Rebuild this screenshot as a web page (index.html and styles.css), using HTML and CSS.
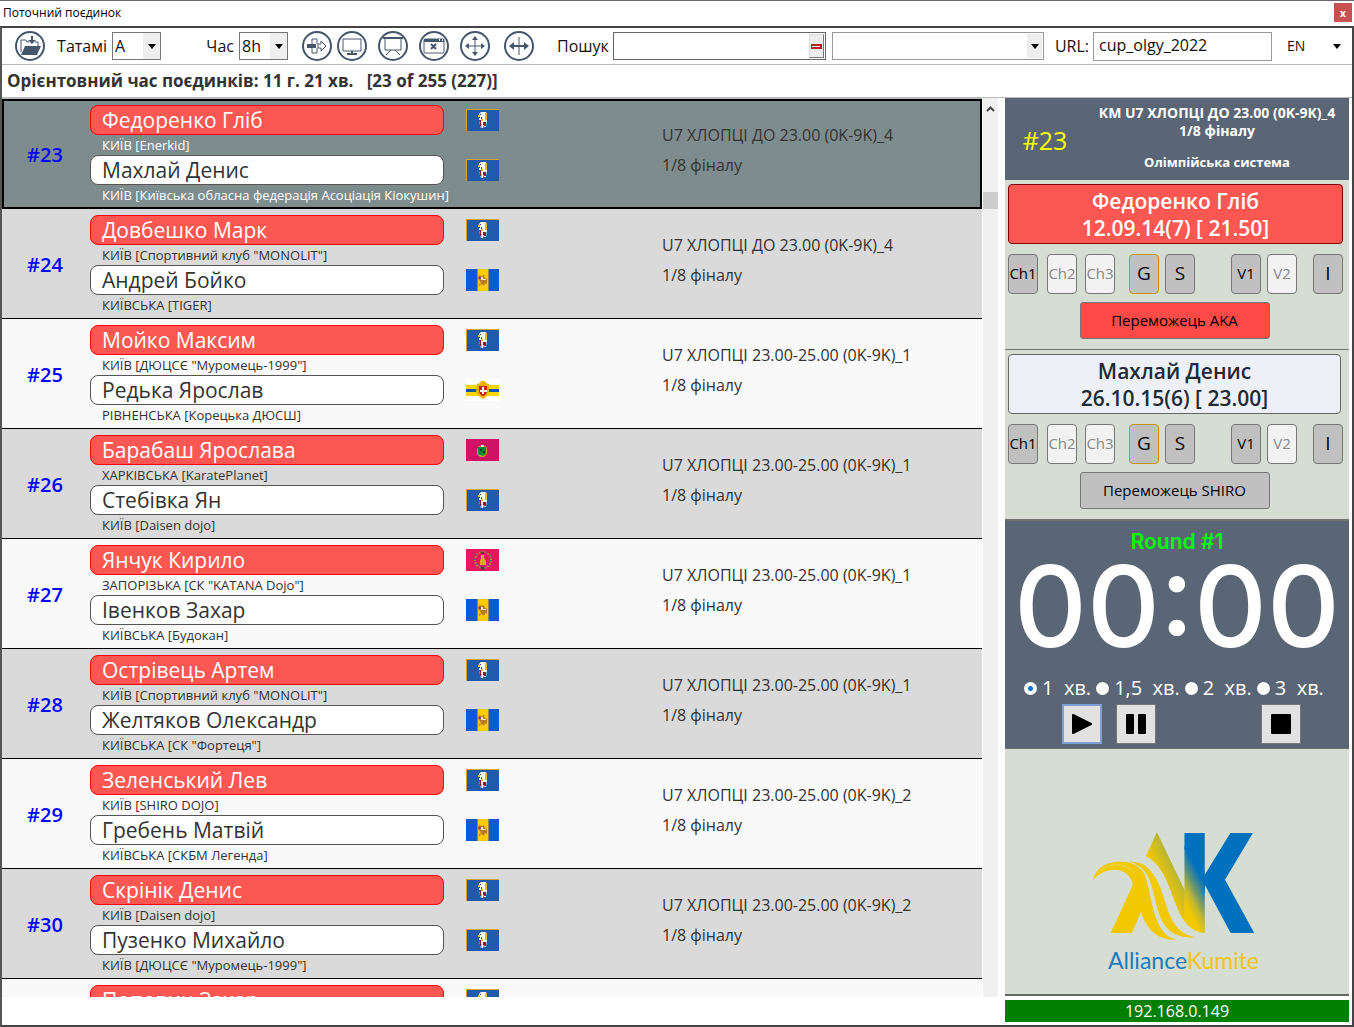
FILE: index.html
```html
<!DOCTYPE html>
<html lang="uk">
<head>
<meta charset="utf-8">
<title>Поточний поєдинок</title>
<link rel="stylesheet" href="styles.css">
</head>
<body>
<svg class="defs" aria-hidden="true">
  <symbol id="kyiv" viewBox="0 0 33 22"><path fill="#205aaa" d="M0 0h33v22H0z"/><path fill="#d3a52c" d="M0 0h33v1H1v21H0z"/><path fill="#fff" d="M13 5l2-2h5l1 3v5l-1 7h-2v-3l-1 4h-2l-2-6z"/><path fill="#e8b82a" d="M12 6h2v2h-2zM19 4h2v7h-2zM15 10h2v2h-2zM15 15h1v4h-1z"/><path fill="#8b1a35" d="M13 11h2v6h-1zM18 13h2v4h-2zM15 8h1v2h-1z"/><path fill="#2a3b60" d="M14 5h1v1h-1zM13 8h1v1h-1zM17 13h1v3h-1z"/></symbol>
  <symbol id="oblast" viewBox="0 0 33 22"><path fill="#1059d6" d="M0 0h33v22H0z"/><path fill="#ffcb05" d="M11 0h11v22H11z"/><path fill="#8a8a60" d="M11 0h1v22h-1zM22 0h1v22h-1z"/><path fill="#b67a28" d="M13 6l3 1 2-1 1 3 2 1v5l-2-1-1 3-2-2-3 2v-2h2l-1-3-2-2z"/><path fill="#f4e8d2" d="M15 8h2v2h3v1h-5z"/><path fill="#9a3c68" d="M12 8h3v2h-2z"/></symbol>
  <symbol id="rivne" viewBox="0 0 33 22"><path fill="#fff" d="M0 0h33v22H0z"/><path fill="#ffd400" d="M0 6h33v11H0z"/><path fill="#0f56a8" d="M0 10h33v3H0z"/><path fill="#eeb300" d="M11 5l3-1 1-2h4l1 2 3 1v9l-3 4-3 2-3-2-4-4z"/><path fill="#d4141c" d="M13 7h8v6q-1 3-4 4-3-1-4-4z"/><path fill="#fff" d="M16 8h2v3h3v2h-3v2h-2v-2h-2v-2h2z"/></symbol>
  <symbol id="kharkiv" viewBox="0 0 33 22"><path fill="#cf1264" d="M0 0h33v22H0z"/><path fill="#c09a2c" d="M11 10l2-3h7l1 3v5l-3 3h-4l-3-3z"/><path fill="#14803d" d="M12 8h8v7l-3 2-5-2z"/><path fill="#fff" d="M15 6h3l-1 2h-2z"/><path fill="#0d4029" d="M14 10h2v2h-2zM17 12h2v2h-2z"/></symbol>
  <symbol id="zapor" viewBox="0 0 33 22"><path fill="#e7175f" d="M0 0h33v22H0z"/><ellipse cx="17" cy="11" rx="8" ry="8" fill="none" stroke="#a38b24" stroke-width="2" stroke-dasharray="2 1"/><ellipse cx="17" cy="11" rx="8" ry="8" fill="none" stroke="#346f8c" stroke-width="2" stroke-dasharray="1 4"/><path fill="#e0a81c" d="M15 6h3v3l2 3v4h-6v-4l1-3z"/><path fill="#65362a" d="M15 3h3v2h-3zM15 18h3v3h-3z"/></symbol>
</svg>

<header class="titlebar">
  <h1>Поточний поєдинок</h1>
  <button class="close" aria-label="Закрити">x</button>
</header>

<div class="window">
  <div class="toolbar">
    <button class="tool" aria-label="Відкрити"><svg viewBox="0 0 30 30"><circle cx="15" cy="15" r="14"/><path class="thin" d="M6 21V9h5l1 2h2M20 11h3v4"/><path class="fill" d="M10 15h16l-4 9H6z"/><path d="M17 5v5"/><path class="fill" d="M13 9h8l-4 4z"/></svg></button>
    <label class="field tatami">Татамі <span class="select"><select><option>A</option></select></span></label>
    <label class="field hour">Час <span class="select"><select><option>8h</option></select></span></label>
    <div class="tools">
      <button class="tool" aria-label="Вхід"><svg viewBox="0 0 30 30"><circle cx="15" cy="15" r="14"/><path class="fill" d="M5 13h9v4H5z"/><path class="thin" d="M10 13V8h5v5M10 17v5h5v-5"/><path class="thin" d="M16 13h3v-3l5 5-5 5v-3h-3z"/></svg></button>
      <button class="tool screen" aria-label="Монітор"><svg viewBox="0 0 30 30"><circle cx="15" cy="15" r="14"/><path class="thin" d="M6 8h18v12H6z"/><path d="M15 20v3M10 23h10"/></svg></button>
      <button class="tool" aria-label="Табло"><svg viewBox="0 0 30 30"><circle cx="15" cy="15" r="14"/><path d="M5 7h20"/><path class="thin" d="M7 8v11h16V8M13 19l-5 5M17 19l5 5"/></svg></button>
      <button class="tool" aria-label="Закрити вікно"><svg viewBox="0 0 30 30"><circle cx="15" cy="15" r="14"/><rect class="thin" x="5" y="8" width="20" height="14" rx="1"/><path class="fill" d="M5 8h20v3H5z"/><path d="M12 13l5 5M17 13l-5 5"/><path class="dots" d="M20 9h1M23 9h1"/></svg></button>
      <button class="tool wide" aria-label="Перемістити"><svg viewBox="0 0 30 30"><circle cx="15" cy="15" r="14"/><path class="thin" d="M6 15h18M15 6v18"/><path class="fill" d="M5 15l4-3v6zM25 15l-4-3v6zM15 5l-3 4h6zM15 25l-3-4h6z"/></svg></button>
      <button class="tool" aria-label="Розтягнути"><svg viewBox="0 0 30 30"><circle cx="15" cy="15" r="14"/><path d="M8 15h14"/><path class="thin" d="M15 6v18"/><path class="fill" d="M5 15l5-4v8zM25 15l-5-4v8z"/></svg></button>
    </div>
    <label class="field search">Пошук <span class="clearable"><input type="text"><button class="clear" aria-label="Очистити"></button></span></label>
    <span class="select filter"><select aria-label="Фільтр"><option></option></select></span>
    <label class="field url">URL: <input type="text" value="cup_olgy_2022"></label>
    <span class="select lang"><select aria-label="Мова"><option>EN</option></select></span>
  </div>
  <h2 class="summary">Орієнтовний час поєдинків: 11 г. 21 хв. &nbsp; [23 of 255 (227)]</h2>

  <div class="main">
    <ol class="fights">
      <li class="fight selected"><span class="num">#23</span>
        <div class="pair"><b class="aka">Федоренко Гліб</b><svg><use href="#kyiv"/></svg><small>КИЇВ [Enerkid]</small><b>Махлай Денис</b><svg><use href="#kyiv"/></svg><small>КИЇВ [Київська обласна федерація Асоціація Кіокушин]</small></div>
        <p>U7 ХЛОПЦІ ДО 23.00 (0K-9K)_4<br>1/8 фіналу</p></li>
      <li class="fight"><span class="num">#24</span>
        <div class="pair"><b class="aka">Довбешко Марк</b><svg><use href="#kyiv"/></svg><small>КИЇВ [Спортивний клуб "MONOLIT"]</small><b>Андрей Бойко</b><svg><use href="#oblast"/></svg><small>КИЇВСЬКА [TIGER]</small></div>
        <p>U7 ХЛОПЦІ ДО 23.00 (0K-9K)_4<br>1/8 фіналу</p></li>
      <li class="fight"><span class="num">#25</span>
        <div class="pair"><b class="aka">Мойко Максим</b><svg><use href="#kyiv"/></svg><small>КИЇВ [ДЮЦСЄ "Муромець-1999"]</small><b>Редька Ярослав</b><svg><use href="#rivne"/></svg><small>РІВНЕНСЬКА [Корецька ДЮСШ]</small></div>
        <p>U7 ХЛОПЦІ 23.00-25.00 (0K-9K)_1<br>1/8 фіналу</p></li>
      <li class="fight"><span class="num">#26</span>
        <div class="pair"><b class="aka">Барабаш Ярослава</b><svg><use href="#kharkiv"/></svg><small>ХАРКІВСЬКА [KaratePlanet]</small><b>Стебівка Ян</b><svg><use href="#kyiv"/></svg><small>КИЇВ [Daisen dojo]</small></div>
        <p>U7 ХЛОПЦІ 23.00-25.00 (0K-9K)_1<br>1/8 фіналу</p></li>
      <li class="fight"><span class="num">#27</span>
        <div class="pair"><b class="aka">Янчук Кирило</b><svg><use href="#zapor"/></svg><small>ЗАПОРІЗЬКА [СК "KATANA Dojo"]</small><b>Івенков Захар</b><svg><use href="#oblast"/></svg><small>КИЇВСЬКА [Будокан]</small></div>
        <p>U7 ХЛОПЦІ 23.00-25.00 (0K-9K)_1<br>1/8 фіналу</p></li>
      <li class="fight"><span class="num">#28</span>
        <div class="pair"><b class="aka">Острівець Артем</b><svg><use href="#kyiv"/></svg><small>КИЇВ [Спортивний клуб "MONOLIT"]</small><b>Желтяков Олександр</b><svg><use href="#oblast"/></svg><small>КИЇВСЬКА [СК "Фортеця"]</small></div>
        <p>U7 ХЛОПЦІ 23.00-25.00 (0K-9K)_1<br>1/8 фіналу</p></li>
      <li class="fight"><span class="num">#29</span>
        <div class="pair"><b class="aka">Зеленський Лев</b><svg><use href="#kyiv"/></svg><small>КИЇВ [SHIRO DOJO]</small><b>Гребень Матвій</b><svg><use href="#oblast"/></svg><small>КИЇВСЬКА [СКБМ Легенда]</small></div>
        <p>U7 ХЛОПЦІ 23.00-25.00 (0K-9K)_2<br>1/8 фіналу</p></li>
      <li class="fight"><span class="num">#30</span>
        <div class="pair"><b class="aka">Скрінік Денис</b><svg><use href="#kyiv"/></svg><small>КИЇВ [Daisen dojo]</small><b>Пузенко Михайло</b><svg><use href="#kyiv"/></svg><small>КИЇВ [ДЮЦСЄ "Муромець-1999"]</small></div>
        <p>U7 ХЛОПЦІ 23.00-25.00 (0K-9K)_2<br>1/8 фіналу</p></li>
      <li class="fight"><span class="num"></span>
        <div class="pair"><b class="aka">Попович Захар</b><svg><use href="#kyiv"/></svg></div></li>
    </ol>
    <div class="scrollbar"><svg viewBox="0 0 9 6"><path d="M1 5l3.500-3.500L8 5"/></svg><i></i></div>

    <aside class="panel">
      <section class="current">
        <strong>#23</strong>
        <p>КМ U7 ХЛОПЦІ ДО 23.00 (0K-9K)_4<br>1/8 фіналу</p>
        <p class="system">Олімпійська система</p>
      </section>
      <section class="side red">
        <div class="card">Федоренко Гліб<br>12.09.14(7) [ 21.50]</div>
        <div class="marks"><button>Ch1</button><button disabled>Ch2</button><button disabled>Ch3</button><button class="big gold">G</button><button class="big">S</button><button>V1</button><button disabled>V2</button><button class="big">I</button></div>
        <button class="winner">Переможець AKA</button>
      </section>
      <section class="side">
        <div class="card">Махлай Денис<br>26.10.15(6) [ 23.00]</div>
        <div class="marks"><button>Ch1</button><button disabled>Ch2</button><button disabled>Ch3</button><button class="big gold">G</button><button class="big">S</button><button>V1</button><button disabled>V2</button><button class="big">I</button></div>
        <button class="winner">Переможець SHIRO</button>
      </section>
      <section class="timer">
        <h3>Round #1</h3>
        <output>00:00</output>
        <div class="durations">
          <label><input type="radio" name="min" checked>1&nbsp; хв.</label>
          <label><input type="radio" name="min">1,5&nbsp; хв.</label>
          <label><input type="radio" name="min">2&nbsp; хв.</label>
          <label><input type="radio" name="min">3&nbsp; хв.</label>
        </div>
        <div class="controls">
          <button class="play" aria-label="Старт"><svg viewBox="0 0 20 20"><path d="M1 1l18 9-18 9z"/></svg></button>
          <button aria-label="Пауза"><svg viewBox="0 0 20 20"><path d="M1 1h6v18H1zM13 1h6v18h-6z"/></svg></button>
          <button class="stop" aria-label="Стоп"><svg viewBox="0 0 20 20"><path d="M1 1h18v18H1z"/></svg></button>
        </div>
      </section>
      <section class="brand">
        <svg viewBox="30 30 500 340" aria-hidden="true">
          <defs>
            <linearGradient id="gold" gradientUnits="userSpaceOnUse" x1="272" y1="175" x2="343" y2="137"><stop offset="0" stop-color="#f2c800"/><stop offset=".3" stop-color="#c4b92e"/><stop offset=".6" stop-color="#6a9573"/><stop offset="1" stop-color="#0071bf"/></linearGradient>
            <linearGradient id="peak" gradientUnits="userSpaceOnUse" x1="225" y1="150" x2="285" y2="120"><stop offset="0" stop-color="#f2c800"/><stop offset="1" stop-color="#a8b044"/></linearGradient>
          </defs>
          <path fill="#0071bf" d="M313 42h61v126l77-126h68l-84 141 88 160h-71l-78-145v30L313 90z"/>
          <path fill="url(#peak)" d="M230 39l84 176v93c-10-12-18-26-24-43-25-65-40-125-93-153z"/>
          <path fill="url(#gold)" d="M313 80l61 115v148c-26-2-46-14-61-36z"/>
          <path fill="#f2c800" d="M38 184c10-65 122-75 152-22 27 52 22 188 100 201-54 4-90-28-108-83l-27 63H91l67-145c-10-58-86-58-120-14z"/>
          <path fill="#f2c800" d="M145 129c66-6 92 60 110 121 18 62 42 98 90 106-66 4-97-28-113-86-18-70-24-130-87-141z"/>
          <path fill="none" stroke="#e9d766" stroke-width="2" d="M48 164c35-34 79-34 108-6M62 153c40-25 82-18 106 16"/>
        </svg>
        <p>Alliance<span>Kumite</span></p>
      </section>
      <footer>192.168.0.149</footer>
    </aside>
  </div>
</div>
</body>
</html>
```
FILE: styles.css
```css
* { box-sizing: border-box; }
body { margin: 0; height: 100vh; display: flex; flex-direction: column; overflow: hidden; background: #fff; color: #333; font: 16px/20px "Open Sans", "Noto Sans", sans-serif; }
h1, h2, h3, p, ol { margin: 0; padding: 0; font-weight: 400; }
button, input, select { font: inherit; color: inherit; margin: 0; padding: 0; }
.defs { display: none; }

.titlebar { height: 26px; border-top: 1px solid #6c696c; padding: 2px 2px 0 3px; display: flex; justify-content: space-between; color: #000; }
.titlebar h1 { font-size: 12px; }
.close { width: 18px; height: 19px; border: 0; background: #c75050; color: #fff; font: 700 10px/16px "Open Sans", sans-serif; }

.window { flex: 1; min-height: 0; border: 2px solid #444; border-left-color: #555; display: flex; flex-direction: column; }

.toolbar { height: 37px; padding: 0 6px 0 13px; border-bottom: 1px solid #bbb; display: flex; align-items: center; color: #111; }
.tool { width: 30px; height: 30px; border: 0; background: none; }
.tool svg { display: block; fill: none; stroke: #44566c; stroke-width: 2; }
.tool .fill { fill: #44566c; stroke: none; }
.tool .thin { stroke-width: 1; }
.tool .dots { stroke: #fff; }
.tools { display: flex; gap: 11px; margin-left: 14px; }
.screen { margin-left: -6px; }
.wide { margin-right: 3px; }
.field { display: flex; align-items: center; justify-content: flex-end; gap: 5px; }
.tatami { width: 104px; margin-left: 12px; }
.hour { width: 84px; margin-left: 43px; }
.search { flex: 269; min-width: 0; margin-left: 23px; gap: 4px; }
.select { position: relative; display: block; }
.select::after { content: ""; position: absolute; right: 5px; top: 12px; border: 4px solid transparent; border-top: 5px solid #000; border-bottom: 0; pointer-events: none; }
.select select { appearance: none; display: block; width: 49px; height: 28px; border: 1px solid #777; border-radius: 0; padding-left: 2px; background: linear-gradient(#eee, #eee) right / 17px 100% no-repeat #fff; }
.clearable { flex: 1; min-width: 60px; height: 28px; display: flex; border: 1px solid #666; padding: 1px; }
.clearable input { flex: 1; min-width: 0; border: 0; }
.clear { width: 15px; border: 1px solid #777; border-top-color: #ddd; border-left-color: #ddd; background: linear-gradient(#fff, #fff) center / 8px 1px no-repeat, linear-gradient(#b81d24, #b81d24) center / 11px 5px no-repeat #eee; }
.filter { flex: 212; min-width: 0; margin-left: 6px; }
.filter select { width: 100%; border-color: #999; background: linear-gradient(#eee, #eee) right 1px center / 15px 24px no-repeat #fff; }
.url { margin-left: 11px; gap: 4px; }
.url input { width: 179px; height: 29px; border: 1px solid #999; padding: 0 5px 3px; }
.lang { margin-left: 14px; }
.lang select { width: 60px; border: 0; background: none; font-size: 14px; padding-left: 1px; }

.summary { height: 33px; border-bottom: 1px solid #bbb; padding: 0 5px; font-size: 17px; line-height: 32px; font-weight: 700; }

.main { flex: 1; min-height: 0; display: flex; }
.fights { flex: 1; min-width: 0; overflow: hidden; list-style: none; margin-bottom: 28px; border-top: 1px solid #bbb; }
.fight { height: 110px; display: grid; grid-template-columns: 88px 572px 1fr; border-bottom: 1px solid #000; background: #f9f9f9; }
.fight:nth-child(even) { background: #dadada; }
.fight.selected { background: #7f8c8d; box-shadow: inset 0 0 0 2px #000; border: 0; }
.num { align-self: center; text-align: center; color: #00f; font-size: 20px; font-weight: 600; padding: 2px 2px 0 0; }
.pair { display: grid; grid-template-columns: 354px 33px; grid-auto-rows: 30px 20px; column-gap: 22px; align-items: center; padding-top: 6px; align-content: start; }
.pair b { height: 30px; border: 1px solid #555; border-radius: 8px; padding-left: 11px; background: #fff; font-weight: 400; font-size: 21px; line-height: 28px; }
.pair .aka { background: #fd5753; border-color: #f00; color: #fff; }
.pair svg { width: 33px; height: 22px; }
.pair small { grid-column: 1 / -1; padding-left: 12px; font-size: 13px; }
.selected small { color: #fff; }
.fight p { padding-top: 21px; line-height: 30px; }

.scrollbar { width: 15px; margin: 0 7px 28px 1px; background: #f0f0f0; padding-top: 8px; }
.scrollbar svg { display: block; width: 9px; height: 6px; margin: 0 auto; fill: none; stroke: #444; stroke-width: 2; }
.scrollbar i { display: block; height: 17px; margin-top: 80px; background: #cdcdcd; }

.panel { width: 344px; margin-right: 3px; display: flex; flex-direction: column; text-align: center; background: #d6ddd2; }
.current { height: 82px; background: #5a6675; color: #fff; display: grid; grid-template: 44px 1fr / 80px 1fr; align-items: center; font-size: 14px; line-height: 18px; padding-top: 2px; }
.current p { font-weight: 700; }
.current .system { font-size: 13px; }
.current strong { grid-row: 1 / 3; color: #ff0; font-size: 25px; font-weight: 400; }
.side { height: 170px; padding: 4px 8px 0 3px; border-bottom: 1px solid #707070; }
.card { height: 60px; border: 1px solid #666; border-radius: 4px; background: #edf1f6; color: #222a35; font-size: 21px; line-height: 27px; font-weight: 600; padding-top: 3px; }
.red .card { background: #fd5753; border-color: #800000; color: #fff; margin-right: -2px; }
.marks { display: grid; grid-template-columns: 39px 38px 44px 36px 66px 36px 46px 30px; margin-top: 10px; }
.marks button { width: 30px; height: 40px; border: 1px solid #777; border-radius: 4px; padding-bottom: 2px; background: #c0c0c0; color: #000; font-size: 15px; }
.marks .big { font-size: 19px; }
.marks .gold { border-color: #c49300; }
.marks button:disabled { background: #f2f2f2; color: #888; }
.winner { width: 190px; height: 37px; margin-top: 8px; padding-bottom: 2px; border: 1px solid #777; border-radius: 3px; background: #c0c0c0; color: #000; font-size: 15px; }
.red .winner { background: #ff4a47; }

.timer { height: 229px; background: #5a6675; border-top: 1px solid #707070; border-bottom: 1px solid #707070; color: #fff; }
.timer h3 { padding-top: 9px; color: #0f0; font: 600 21px/24px Inter, "Open Sans", sans-serif; }
.timer output { display: block; font: 500 113px/104px Inter, "Open Sans", sans-serif; }
.durations { display: flex; justify-content: center; gap: 5px; margin-top: 18px; padding-right: 6px; font-size: 20px; line-height: 24px; }
.durations label { display: flex; align-items: center; gap: 5px; }
.durations input { appearance: none; width: 13px; height: 13px; border-radius: 50%; background: #fff; }
.durations input:checked { background: radial-gradient(circle, #0078d7 2px, #fff 3px); }
.controls { display: flex; gap: 14px; padding: 4px 48px 0 57px; }
.controls button { width: 40px; height: 40px; border: 1px solid #777; background: #e2e2e2; display: grid; place-content: center; }
.controls svg { width: 20px; height: 20px; stroke: #000; stroke-width: 2; stroke-linejoin: round; }
.controls .play { border: 2px solid #7f9fd8; }
.controls .stop { margin-left: auto; }

.brand { flex: 1; min-height: 0; border-bottom: 2px solid #666; padding-top: 80px; }
.brand svg { display: block; width: 167px; height: 113px; margin-left: 85px; }
.brand p { margin: 4px 0 0 13px; color: #1b7bbd; font: 400 23px/28px Lato, sans-serif; }
.brand span { color: #efc51b; }
.panel footer { height: 29px; border: solid #fff; border-width: 4px 0 3px; background: #008000; color: #fff; line-height: 22px; }
```
